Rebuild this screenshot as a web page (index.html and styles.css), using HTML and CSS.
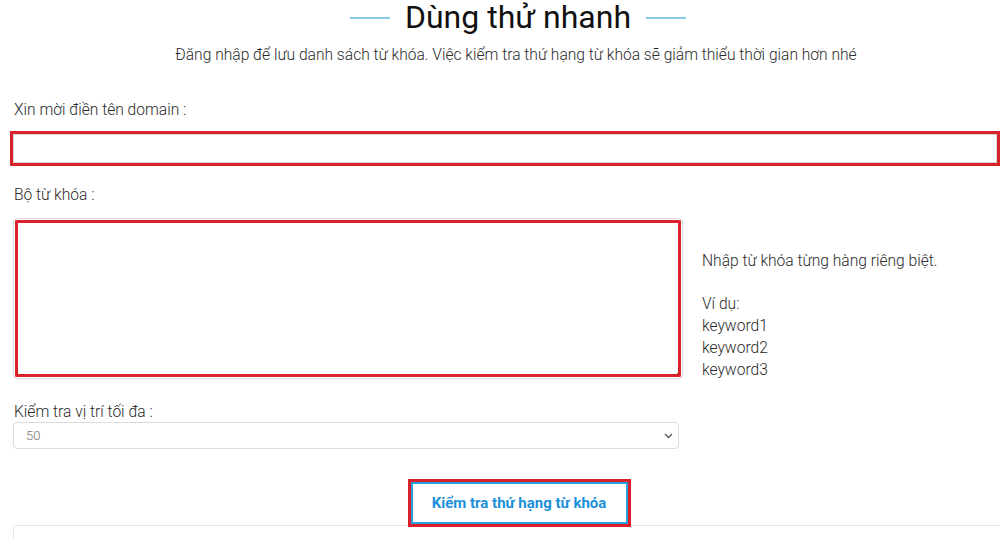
FILE: index.html
```html
<!DOCTYPE html>
<html lang="vi">
<head>
<meta charset="utf-8">
<title>Dùng thử nhanh</title>
<link rel="stylesheet" href="styles.css">
</head>
<body>
<div class="page">
  <div class="head">
    <h1 class="title"><span class="dash"></span><span class="title-text">Dùng thử nhanh</span><span class="dash"></span></h1>
    <p class="subtitle">Đăng nhập để lưu danh sách từ khóa. Việc kiểm tra thứ hạng từ khóa sẽ giảm thiểu thời gian hơn nhé</p>
  </div>

  <form class="form">
    <label class="label label-domain">Xin mời điền tên domain :</label>
    <input class="input-domain" type="text">

    <label class="label label-keys">Bộ từ khóa :</label>
    <div class="keys-row">
      <textarea class="keys"></textarea>
      <div class="hint">
        <p class="hint-line">Nhập từ khóa từng hàng riêng biệt.</p>
        <p class="hint-example">Ví dụ:<br>keyword1<br>keyword2<br>keyword3</p>
      </div>
    </div>

    <label class="label label-max">Kiểm tra vị trí tối đa :</label>
    <div class="select-wrap">
      <select class="select">
        <option>50</option>
      </select>
      <svg class="chev" width="9" height="6" viewBox="0 0 9 6"><path d="M1 1l3.5 3.5L8 1" fill="none" stroke="#555" stroke-width="1.3"/></svg>
    </div>

    <div class="actions">
      <button type="button" class="btn">Kiểm tra thứ hạng từ khóa</button>
    </div>
    <div class="results"></div>
  </form>
</div>
</body>
</html>
```

FILE: styles.css
```css
* { box-sizing: border-box; }
html, body { margin: 0; padding: 0; background: #fff; }
body {
  font-family: Roboto, "Noto Sans", Arial, sans-serif;
  font-weight: 300;
  color: #2b2b2b;
  overflow: hidden;
  width: 1000px;
  height: 538px;
}
.page { padding: 0 0 0 13px; width: 1000px; }

.head { text-align: center; margin-left: -13px; }
.title {
  margin: 0;
  height: 34px;
  display: flex;
  justify-content: center;
  align-items: center;
  font-weight: 400;
  font-size: 32px;
  line-height: 34px;
  color: #111;
  padding-left: 36px;
}
.title-text { margin: 0 15px; }
.dash { display: block; width: 40px; height: 2px; background: #8ccbe6; margin-top: 1px; }
.subtitle {
  margin: 11px 0 0;
  font-size: 15.6px;
  line-height: 20px;
  padding-left: 32px;
}

.form { display: flex; flex-direction: column; }
.label { display: block; font-size: 15.6px; line-height: 20px; margin-left: 1px; }
.label-domain { margin-top: 35px; }
.input-domain {
  margin-top: 14px;
  width: 984px;
  height: 29px;
  border: 1px solid #d6d6d6;
  border-radius: 0;
  outline: 3px solid #d8212b;
  background: #fff;
}
.label-keys { margin-top: 22px; }
.keys-row { display: flex; margin-top: 13px; }
.keys {
  width: 670px;
  height: 161px;
  border: 1px solid #dcdcdc;
  border-radius: 3px;
  outline: 3px solid #d8212b;
  outline-offset: -5px;
  resize: vertical;
  background: #fff;
  flex: none;
}
.hint { margin-left: 19px; font-size: 15.6px; line-height: 22px; }
.hint-line { margin: 32px 0 0; }
.hint-example { margin: 21px 0 0; }

.label-max { margin-top: 21px; }
.select-wrap { position: relative; width: 666px; }
.select {
  width: 666px;
  height: 27px;
  border: 1px solid #dcdcdc;
  border-radius: 4px;
  background: #fff;
  color: #777;
  font-family: Roboto, Arial, sans-serif;
  font-weight: 300;
  font-size: 13px;
  padding: 0 12px;
  appearance: none;
  -webkit-appearance: none;
}
.chev { position: absolute; right: 6px; top: 11px; }

.actions { display: flex; justify-content: center; margin-top: 33px; padding-left: 25px; }
.btn {
  width: 217px;
  height: 42px;
  background: #fff;
  border: 2px solid #2a9fe0;
  outline: 3px solid #d8212b;
  color: #1b8fd9;
  font-family: Roboto, Arial, sans-serif;
  font-weight: 700;
  font-size: 15px;
  position: relative;
  z-index: 1;
  cursor: pointer;
}
.results {
  margin-top: 1px;
  height: 40px;
  width: 1000px;
  border: 1px solid #e3e3e3;
  border-radius: 3px;
}
```
